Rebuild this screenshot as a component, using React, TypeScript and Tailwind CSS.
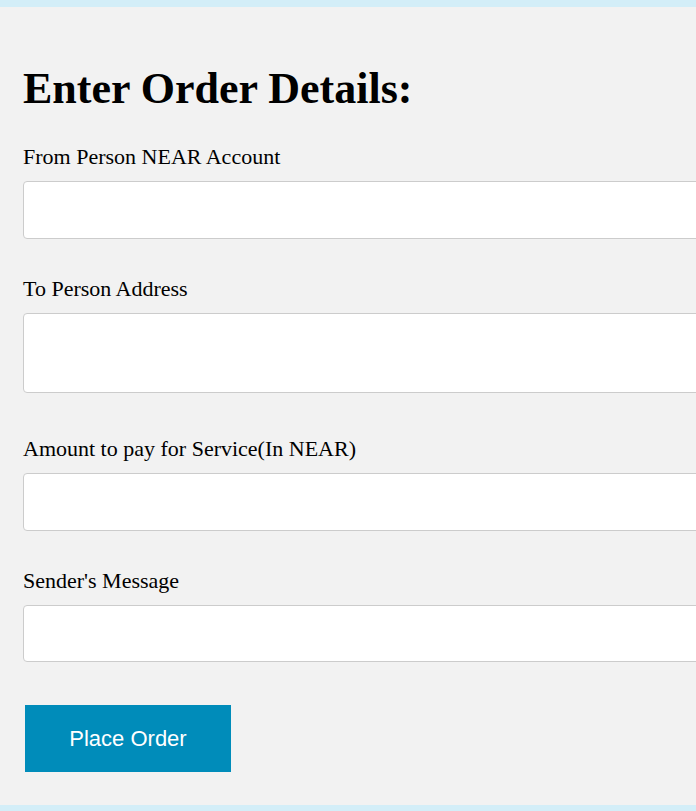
import React from 'react';

const fields = [
  { label: 'From Person NEAR Account', height: 'h-[58px]', gap: 'mt-[31px]' },
  { label: 'To Person Address', height: 'h-[80px]', gap: 'mt-[38px]' },
  { label: 'Amount to pay for Service(In NEAR)', height: 'h-[58px]', gap: 'mt-[44px]' },
  { label: "Sender's Message", height: 'h-[57px]', gap: 'mt-[38px]' },
];

const App = () => {
  return (
    <div className="h-[811px] overflow-hidden flex flex-col bg-[#f2f2f2]">
      {/* Top strip */}
      <div className="h-[7px] bg-[#d3eef8] shrink-0" />

      <div className="flex-1 pl-[23px] pt-[57px] font-['Liberation_Serif',serif] text-black">
        <h1 className="text-[44px] leading-[50px] font-bold">Enter Order Details:</h1>

        {fields.map((f) => (
          <div key={f.label} className={f.gap}>
            <label className="block text-[22px] leading-[24px]">{f.label}</label>
            <input
              type="text"
              className={`mt-[12px] block w-[720px] ${f.height} bg-white border border-[#cccccc] rounded-[4px] outline-none`}
            />
          </div>
        ))}

        <button className="mt-[43px] ml-[2px] w-[206px] h-[67px] bg-[#008cba] text-white font-['Liberation_Sans',sans-serif] text-[22px]">
          Place Order
        </button>
      </div>

      {/* Bottom strip */}
      <div className="h-[6px] bg-[#d3eef8] shrink-0" />
    </div>
  );
};

export default App;
